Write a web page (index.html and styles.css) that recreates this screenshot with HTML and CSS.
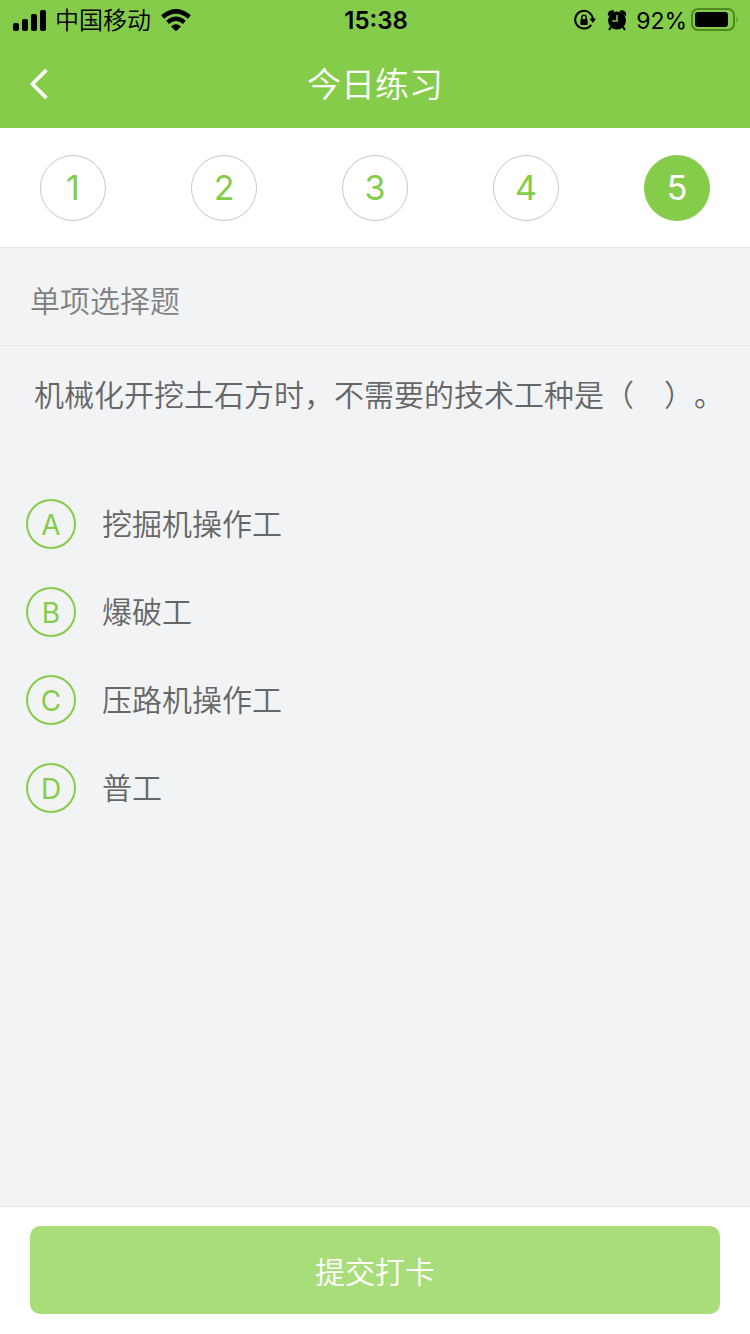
FILE: index.html
```html
<!DOCTYPE html>
<html lang="zh-CN">
<head>
    <meta charset="UTF-8">
    <meta name="viewport" content="width=device-width, initial-scale=1.0">
    <title>今日练习</title>
    <link rel="stylesheet" href="styles.css">
</head>
<body>
    <header class="header">
        <div class="status-bar">
            <div class="status-left">
                <svg class="icon-signal" width="34" height="22" viewBox="0 0 34 22">
                    <rect x="0" y="14" width="6" height="8" rx="2"/>
                    <rect x="9" y="10" width="6" height="12" rx="2"/>
                    <rect x="18" y="5" width="6" height="17" rx="2"/>
                    <rect x="27" y="1" width="6" height="21" rx="2"/>
                </svg>
                <span class="carrier">中国移动</span>
                <svg class="icon-wifi" width="30" height="22" viewBox="0 0 30 22">
                    <path d="M1.6 8 Q15 -3.4 28.4 8" fill="none" stroke="#000" stroke-width="4.6"/>
                    <path d="M6.6 13.4 Q15 6.2 23.4 13.4" fill="none" stroke="#000" stroke-width="4.2"/>
                    <path d="M10 17.4 Q15 13.2 20 17.4 L15 22.4 Z"/>
                </svg>
            </div>
            <span class="time">15:38</span>
            <div class="status-right">
                <svg width="22" height="22" viewBox="0 0 22 22">
                    <path d="M17.2 15.8 A8.8 8.8 0 1 1 18.8 10" fill="none" stroke="#000" stroke-width="2"/>
                    <path d="M15.4 9.6 H22 L18.8 14 Z"/>
                    <rect x="6.4" y="10" width="7.2" height="6" rx="1"/>
                    <path d="M7.8 10.4 V8.4 A2.2 2.2 0 0 1 12.2 8.4 V10.4" fill="none" stroke="#000" stroke-width="1.5"/>
                </svg>
                <svg class="icon-alarm" width="20" height="22" viewBox="0 0 20 22">
                    <circle cx="10" cy="11.6" r="9"/>
                    <path d="M1 6.4 C0 3.4 3.4 0.4 6.6 1.4 L7.6 2.2 L1.8 7 Z M19 6.4 C20 3.4 16.6 0.4 13.4 1.4 L12.4 2.2 L18.2 7 Z"/>
                    <path d="M4 18 L2 21 M16 18 L18 21" stroke="#000" stroke-width="2.2"/>
                    <path d="M10 6 V12 H5.2" fill="none" stroke="#86cc4b" stroke-width="1.5"/>
                </svg>
                <span class="battery-text">92%</span>
                <svg width="48" height="24" viewBox="0 0 48 24">
                    <rect x="1" y="1" width="42" height="21" rx="6" fill="none" stroke="#4f8a1e" stroke-width="2"/>
                    <rect x="4" y="4" width="33" height="15" rx="3"/>
                    <path d="M45.5 8.5 Q48 11.5 45.5 14.5 Z" fill="#4f8a1e"/>
                </svg>
            </div>
        </div>
        <div class="nav-bar">
            <button class="back" type="button" aria-label="返回">
                <svg width="20" height="32" viewBox="0 0 20 32">
                    <path d="M18.4 2 L4.4 16 L18.4 30" fill="none" stroke="#fff" stroke-width="3.8" stroke-linejoin="round"/>
                </svg>
            </button>
            <h1>今日练习</h1>
        </div>
    </header>

    <nav class="steps">
        <button class="step" type="button">1</button>
        <button class="step" type="button">2</button>
        <button class="step" type="button">3</button>
        <button class="step" type="button">4</button>
        <button class="step active" type="button">5</button>
    </nav>

    <form class="quiz">
        <h2 class="question-type">单项选择题</h2>
        <fieldset class="question">
            <legend>机械化开挖土石方时，不需要的技术工种是（　）。</legend>
            <div class="options">
                <label class="option">
                    <input type="radio" name="answer" value="A">
                    <span class="letter">A</span>
                    <span>挖掘机操作工</span>
                </label>
                <label class="option">
                    <input type="radio" name="answer" value="B">
                    <span class="letter">B</span>
                    <span>爆破工</span>
                </label>
                <label class="option">
                    <input type="radio" name="answer" value="C">
                    <span class="letter">C</span>
                    <span>压路机操作工</span>
                </label>
                <label class="option">
                    <input type="radio" name="answer" value="D">
                    <span class="letter">D</span>
                    <span>普工</span>
                </label>
            </div>
        </fieldset>
        <div class="footer">
            <button class="submit" type="submit" disabled>提交打卡</button>
        </div>
    </form>
</body>
</html>
```
FILE: styles.css
```css
* {
    box-sizing: border-box;
}
body {
    margin: 0;
    min-height: 100vh;
    display: flex;
    flex-direction: column;
    background: #f2f3f5;
    color: #666;
    font-family: Inter, 'Noto Sans CJK SC', sans-serif;
    font-size: 30px;
    font-weight: 350;
    text-spacing-trim: space-all;
}
button {
    padding: 0;
    border: none;
    background: none;
    font: inherit;
    cursor: pointer;
}
svg {
    flex: none;
}
.header {
    background: #86cc4b;
}
.status-bar {
    height: 40px;
    padding: 0 11px 0 13px;
    display: flex;
    align-items: center;
    color: #000;
    font-size: 24px;
    line-height: 40px;
}
.status-left,
.status-right {
    flex: 1;
    display: flex;
    align-items: center;
}
.status-right {
    justify-content: flex-end;
}
.carrier {
    margin: 0 10px 0 8px;
    padding-top: 2px;
}
.time {
    padding-top: 2px;
    font-weight: 600;
}
.icon-alarm {
    margin: 0 9px 0 11px;
}
.battery-text {
    margin-right: 4px;
    padding-top: 2px;
    font-size: 23px;
    font-weight: 400;
}
.nav-bar {
    height: 88px;
    padding: 0 28px;
    display: grid;
    grid-template-columns: 20px 1fr 20px;
    align-items: center;
    color: #fff;
}
.back svg {
    display: block;
}
h1 {
    margin: 0;
    padding-top: 2px;
    font-size: 34px;
    font-weight: 350;
    line-height: 50px;
    text-align: center;
}
.steps {
    height: 120px;
    padding: 0 40px;
    display: flex;
    align-items: center;
    justify-content: space-between;
    background: #fff;
    border-bottom: 1px solid #e6e6e6;
}
.step {
    width: 66px;
    height: 66px;
    border: 1px solid #c8c8c8;
    border-radius: 50%;
    color: #86cc4b;
    font-size: 34px;
    font-weight: 400;
}
.step.active {
    border-color: #86cc4b;
    background: #86cc4b;
    color: #fff;
}
.quiz {
    flex: 1;
    display: flex;
    flex-direction: column;
}
.question-type {
    margin: 0;
    padding: 28px 30px 19px;
    border-bottom: 1px solid #e4e6e9;
    color: #808080;
    font-size: 30px;
    font-weight: 350;
    line-height: 50px;
}
.question {
    flex: 1;
    margin: 0;
    padding: 24px 26px;
    border: none;
    line-height: 50px;
}
.question legend {
    float: left;
    width: 100%;
    padding: 0 0 0 8px;
}
.options {
    clear: both;
    padding-top: 79px;
    display: flex;
    flex-direction: column;
    gap: 38px;
}
.option {
    display: flex;
    align-items: center;
    gap: 26px;
    cursor: pointer;
}
.option input {
    position: absolute;
    width: 50px;
    height: 50px;
    margin: 0;
    opacity: 0;
}
.letter {
    width: 50px;
    height: 50px;
    border: 2px solid #86cc4b;
    border-radius: 50%;
    color: #86cc4b;
    font-size: 28px;
    font-weight: 400;
    line-height: 48px;
    text-align: center;
}
.option input:checked + .letter {
    background: #86cc4b;
    color: #fff;
}
.footer {
    padding: 19px 30px 20px;
    background: #fff;
    border-top: 1px solid #e6e6e6;
}
.submit {
    display: block;
    width: 100%;
    height: 88px;
    border-radius: 10px;
    background: #86cc4b;
    color: #fff;
}
.submit:disabled {
    background: #a9dd7a;
    cursor: default;
}
```
